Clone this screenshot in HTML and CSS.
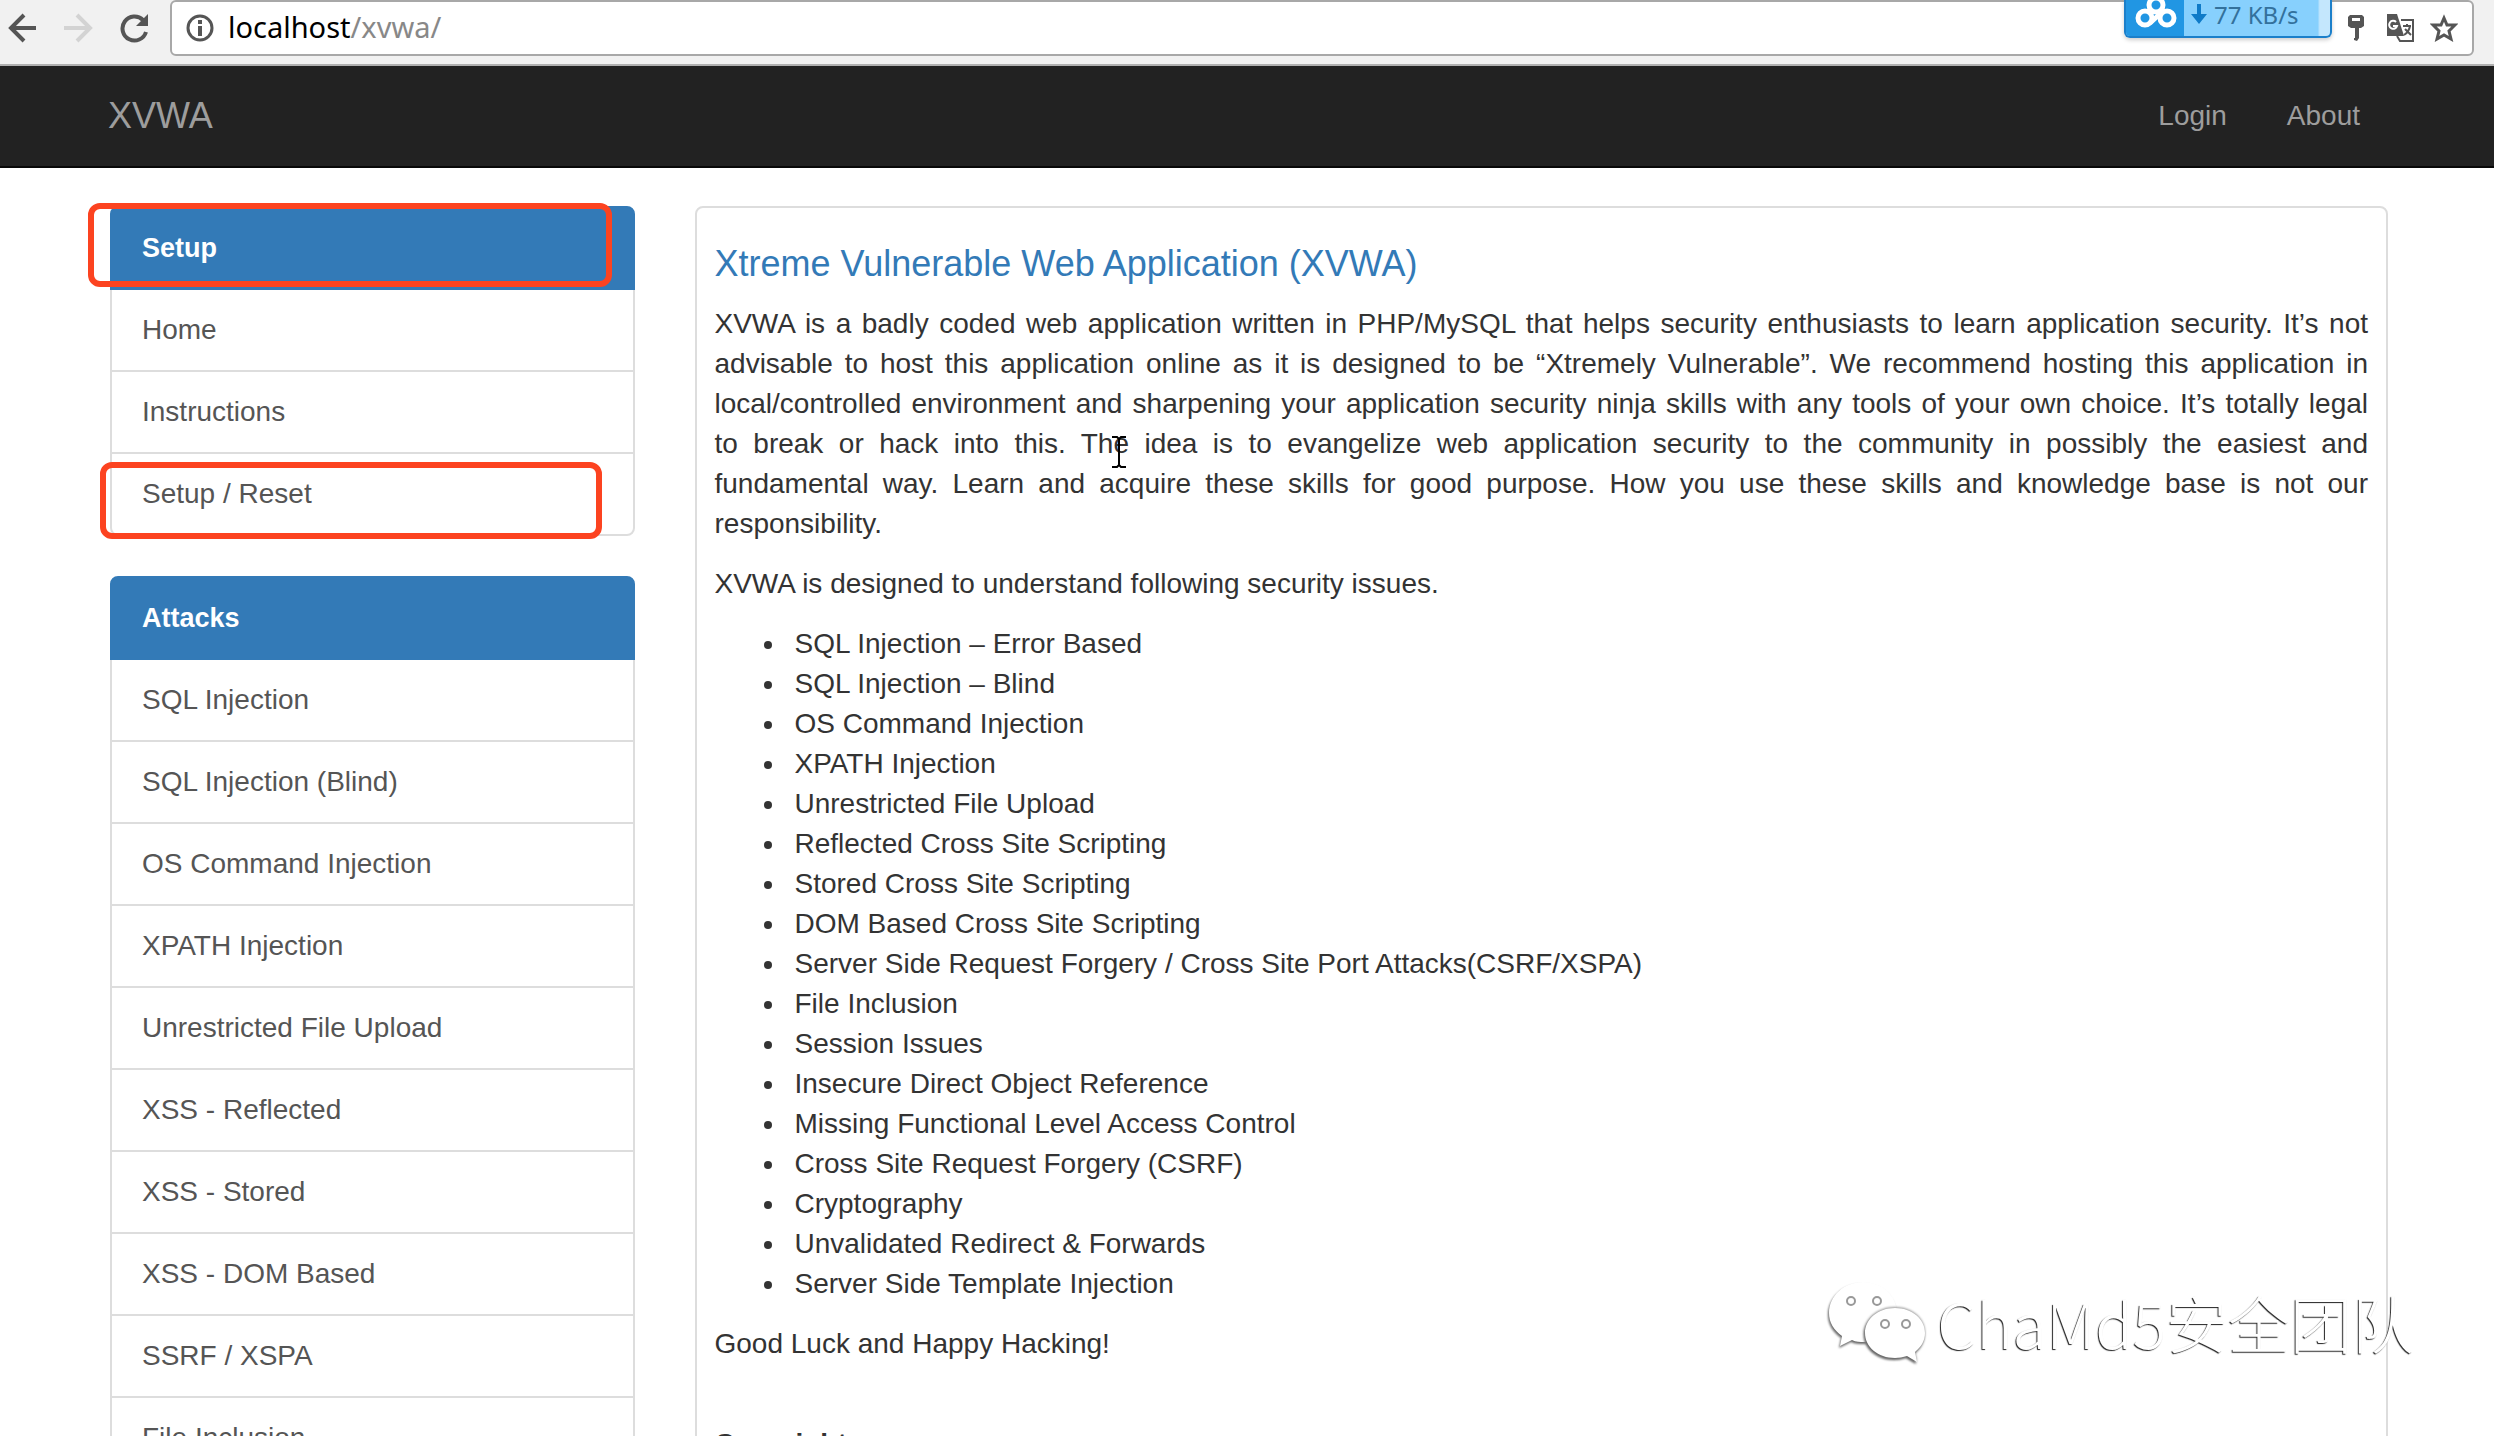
FILE: index.html
```html
<!DOCTYPE html>
<html lang="en">
<head>
<meta charset="utf-8">
<title>XVWA</title>
<link rel="stylesheet" href="styles.css">
</head>
<body>
<header class="toolbar">
  <button class="tool" aria-label="Back"><svg width="30" height="32" viewBox="0 0 30 32" fill="none" stroke="#555" stroke-width="4"><path d="M28 16H4M16 3L3 16l13 13"/></svg></button>
  <button class="tool" aria-label="Forward" disabled><svg width="30" height="32" viewBox="0 0 30 32" fill="none" stroke="#d3d3d3" stroke-width="4"><path d="M0 16h25M13 3l13 13-13 13"/></svg></button>
  <button class="tool" aria-label="Reload"><svg width="30" height="32" viewBox="0 0 30 32"><path d="M23 8A12 12 0 1 0 26 20" fill="none" stroke="#555" stroke-width="4"/><path d="M28 2v12H16z" fill="#555"/></svg></button>
  <div class="address">
    <svg class="info" width="28" height="32" viewBox="0 0 28 32"><circle cx="14" cy="16" r="12" fill="none" stroke="#555" stroke-width="3"/><path d="M12 8h4v4h-4zM12 14h4v10h-4z" fill="#555"/></svg>
    <p class="url">localhost<span>/xvwa/</span></p>
    <div class="extras">
      <svg class="key" width="16" height="26" viewBox="0 0 16 26"><path d="M2 0h12l2 2v9l-3 2h-2v10l-2 3-3-1v-2h1V13H3l-3-2V2z" fill="#555"/><path d="M4 3h8v3H4z" fill="#fff"/></svg>
      <svg width="28" height="28" viewBox="0 0 28 28"><path d="M15 6h12v21H14l-3-5" fill="#fff" stroke="#555" stroke-width="2"/><path d="M1 0h10l7 22H1z" fill="#555"/><path d="M10 8a4 4 0 1 0 1 4H7" fill="none" stroke="#fff" stroke-width="2"/><path d="M17 12h8M21 10v2M24 12q-1 6-6 9M19 15l6 6" fill="none" stroke="#555" stroke-width="2"/></svg>
      <svg width="28" height="28" viewBox="0 0 28 28"><path d="M14 4l3 7h8l-6 6 2 8-7-4-7 4 2-8-6-6h8z" fill="none" stroke="#555" stroke-width="3"/></svg>
    </div>
  </div>
  <div class="speed">
    <svg class="speed-logo" width="58" height="36" viewBox="0 0 58 36"><g fill="none" stroke="#fff" stroke-width="5"><circle cx="19" cy="18" r="7"/><circle cx="41" cy="18" r="7"/><circle cx="30" cy="5" r="7"/><path d="M24 23L36 12"/></g></svg>
    <svg class="down" width="16" height="20" viewBox="0 0 16 20"><path d="M6 0h4v10h6l-8 10-8-10h6z" fill="#0f7bc8"/></svg>
    <span>77 KB/s</span>
  </div>
</header>
<nav class="navbar">
  <a class="brand" href="#">XVWA</a>
  <a href="#">Login</a>
  <a href="#">About</a>
</nav>
<div class="container">
  <aside class="side">
    <div class="list">
      <a class="active" href="#">Setup</a>
      <a href="#">Home</a>
      <a href="#">Instructions</a>
      <a href="#">Setup / Reset</a>
      <i class="mark mark-head"></i>
      <i class="mark mark-reset"></i>
    </div>
    <div class="list">
      <a class="active" href="#">Attacks</a>
      <a href="#">SQL Injection</a>
      <a href="#">SQL Injection (Blind)</a>
      <a href="#">OS Command Injection</a>
      <a href="#">XPATH Injection</a>
      <a href="#">Unrestricted File Upload</a>
      <a href="#">XSS - Reflected</a>
      <a href="#">XSS - Stored</a>
      <a href="#">XSS - DOM Based</a>
      <a href="#">SSRF / XSPA</a>
      <a href="#">File Inclusion</a>
    </div>
  </aside>
  <main class="content">
    <article class="panel">
      <h4><a href="#">Xtreme Vulnerable Web Application (XVWA)</a></h4>
      <p class="intro">XVWA is a badly coded web application written in PHP/MySQL that helps security enthusiasts to learn application security. It’s not advisable to host this application online as it is designed to be “Xtremely Vulnerable”. We recommend hosting this application in local/controlled environment and sharpening your application security ninja skills with any tools of your own choice. It’s totally legal to&nbsp;break or hack into this. The idea is to evangelize web application security to the community in possibly the easiest and fundamental&nbsp;way. Learn and acquire these skills for good purpose. How you use these skills and knowledge base is not our responsibility.</p>
      <p>XVWA is designed to understand following security issues.</p>
      <ul>
        <li>SQL Injection – Error Based</li>
        <li>SQL Injection – Blind</li>
        <li>OS Command Injection</li>
        <li>XPATH Injection</li>
        <li>Unrestricted File Upload</li>
        <li>Reflected Cross Site Scripting</li>
        <li>Stored Cross Site Scripting</li>
        <li>DOM Based Cross Site Scripting</li>
        <li>Server Side Request Forgery / Cross Site Port Attacks(CSRF/XSPA)</li>
        <li>File Inclusion</li>
        <li>Session Issues</li>
        <li>Insecure Direct Object Reference</li>
        <li>Missing Functional Level Access Control</li>
        <li>Cross Site Request Forgery (CSRF)</li>
        <li>Cryptography</li>
        <li>Unvalidated Redirect &amp; Forwards</li>
        <li>Server Side Template Injection</li>
      </ul>
      <p>Good Luck and Happy Hacking!</p>
      <p class="copyright">Copyright</p>
    </article>
  </main>
</div>
<svg class="cursor" width="14" height="32" viewBox="0 0 14 32"><path d="M0 1h5l2 2 2-2h5M7 2v28M0 31h5l2-2 2 2h5" fill="none" stroke="#000" stroke-width="2"/></svg>
<div class="watermark">
  <svg width="96" height="82" viewBox="0 0 96 82">
    <path class="bubble" d="M34 1C15 1 0 15 0 32c0 10 5 17 13 23l-2 10 12-6c4 2 8 2 12 2 19 0 33-12 33-29S53 1 34 1z"/>
    <path class="bubble" d="M66 27c-17 0-30 11-30 25s13 25 30 25c4 0 8-1 12-2l10 6-2-10c6-5 10-11 10-19 0-14-13-25-30-25z"/>
    <g class="eyes"><circle cx="22" cy="20" r="4"/><circle cx="48" cy="20" r="4"/><circle cx="56" cy="43" r="4"/><circle cx="77" cy="43" r="4"/></g>
  </svg>
  <span>ChaMd5安全团队</span>
</div>
</body>
</html>
```
FILE: styles.css
```css
* { box-sizing: border-box; }
html { overflow: hidden; height: 100%; }
body {
  margin: 0;
  height: 100%;
  overflow: hidden;
  background: #fff;
  color: #333;
  font: 28px/40px "Liberation Sans", Arial, sans-serif;
}
a { color: inherit; text-decoration: none; }
svg { display: block; flex: none; }

.toolbar {
  position: relative;
  display: flex;
  align-items: flex-start;
  height: 66px;
  padding: 0 20px 0 8px;
  background: #f1f1f1;
  border-bottom: 2px solid #b0b0b0;
}
.tool {
  display: flex;
  align-items: center;
  width: 56px;
  height: 56px;
  padding: 0;
  border: 0;
  background: none;
}
.address {
  flex: 1;
  display: flex;
  align-items: center;
  height: 56px;
  margin-left: -6px;
  padding: 0 14px;
  background: #fff;
  border: 2px solid #a8a8a8;
  border-radius: 6px;
}
.url {
  flex: 1;
  margin: 0 0 2px 14px;
  color: #000;
  font-family: "Noto Sans", "Open Sans", sans-serif;
  font-size: 29px;
}
.url span { color: #888; }
.extras { display: flex; align-items: center; gap: 16px; }
.key { margin-right: 6px; }
.speed {
  position: absolute;
  top: 0;
  right: 162px;
  width: 208px;
  height: 38px;
  display: flex;
  align-items: flex-start;
  gap: 7px;
  overflow: hidden;
  background: linear-gradient(90deg, #87d0fd 94%, #c4e7fd 95%);
  border: 2px solid #1b7fca;
  border-top: 0;
  border-radius: 0 0 6px 6px;
  box-shadow: 0 2px 4px #0003;
  color: #33719c;
  font: 24px/30px "Noto Sans", sans-serif;
}
.speed-logo { background: #2196e3; }
.down { margin-top: 4px; }

.navbar {
  display: flex;
  align-items: center;
  gap: 60px;
  height: 102px;
  padding: 0 134px 0 108px;
  background: #222;
  border-bottom: 2px solid #080808;
  color: #9d9d9d;
}
.brand { flex: 1; font-size: 36px; }

.container { display: flex; padding: 38px 76px 0 80px; }
.side { width: 25%; padding: 0 30px; }
.content { width: 75%; padding: 0 30px; }

.list { position: relative; margin-bottom: 40px; }
.list a {
  display: block;
  margin-top: -2px;
  padding: 20px 30px;
  border: 2px solid #ddd;
  color: #555;
}
.list a.active {
  position: relative;
  margin-top: 0;
  border-color: #337ab7;
  border-radius: 8px 8px 0 0;
  background: #337ab7;
  color: #fff;
  font-size: 27px;
  font-weight: bold;
}
.list a:last-of-type { border-radius: 0 0 8px 8px; }
.mark {
  position: absolute;
  border: 6px solid #fc4320;
  border-radius: 12px;
}
.mark-head { left: -22px; right: 23px; top: -3px; height: 84px; }
.mark-reset { left: -10px; right: 33px; bottom: -3px; height: 77px; }

.panel {
  padding: 16px 18px;
  border: 2px solid #ddd;
  border-radius: 8px;
}
h4 {
  margin: 20px 0;
  color: #337ab7;
  font-size: 36px;
  font-weight: normal;
  line-height: 40px;
}
.panel p { margin: 0 0 20px; }
.intro { text-align: justify; }
.panel ul {
  margin: 0 0 20px;
  padding-left: 80px;
  list-style: none;
}
.panel li::before {
  content: "";
  display: inline-block;
  width: 8px;
  height: 8px;
  margin: 0 23px 0 -31px;
  border-radius: 50%;
  background: #333;
  vertical-align: 4px;
}
.panel .copyright { margin-top: 60px; font-weight: bold; }

.cursor { position: absolute; left: 1112px; top: 436px; }

.watermark {
  position: absolute;
  right: 80px;
  bottom: 70px;
  display: flex;
  align-items: center;
  gap: 12px;
  color: #fff;
  font: 62px/88px "Noto Sans CJK SC", sans-serif;
  font-weight: 300;
  text-shadow: -1px 1px 1px #222;
}
.watermark svg { overflow: visible; fill: #fff; }
.bubble { filter: drop-shadow(-1px 2px 1px #666); }
.bubble + .bubble { filter: drop-shadow(-1px 2px 1px #666) drop-shadow(0 -1px 1px #999); }
.eyes { stroke: #999; stroke-width: 2; }
```
